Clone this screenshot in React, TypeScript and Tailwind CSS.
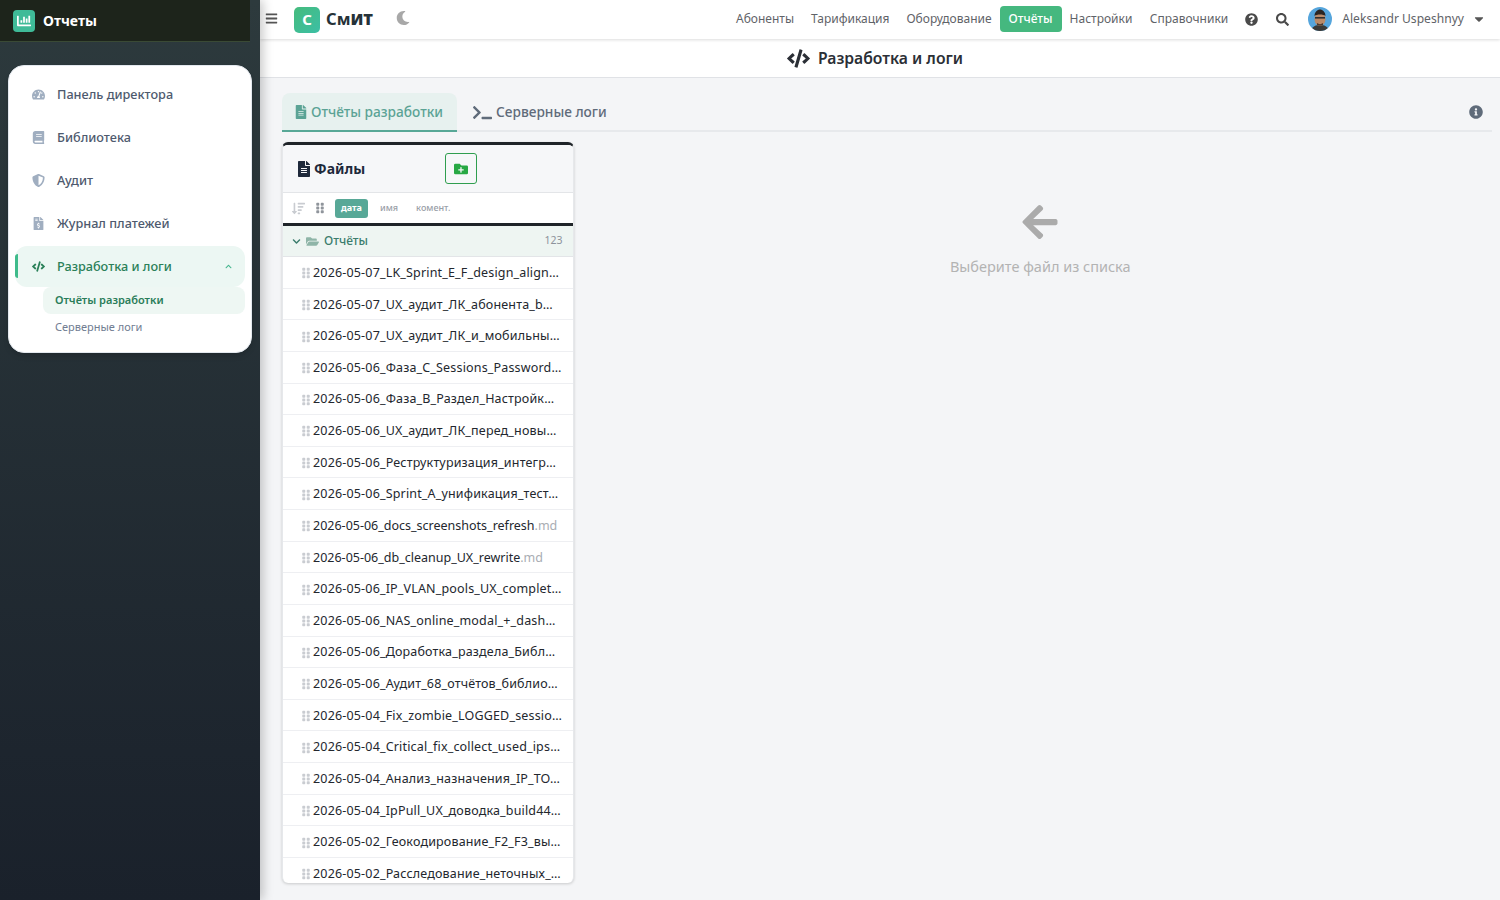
import {
  FaArrowLeft,
  FaBars,
  FaBook,
  FaCaretDown,
  FaChartBar,
  FaChevronDown,
  FaChevronUp,
  FaCode,
  FaFileAlt,
  FaFileInvoiceDollar,
  FaFolderOpen,
  FaFolderPlus,
  FaGripVertical,
  FaInfoCircle,
  FaMoon,
  FaQuestionCircle,
  FaSearch,
  FaShieldAlt,
  FaSortAmountDown,
  FaTachometerAlt,
  FaTerminal,
} from "react-icons/fa";

const files = [
  { name: "2026-05-07_LK_Sprint_E_F_design_align…" },
  { name: "2026-05-07_UX_аудит_ЛК_абонента_b…" },
  { name: "2026-05-07_UX_аудит_ЛК_и_мобильны…" },
  { name: "2026-05-06_Фаза_C_Sessions_Password…" },
  { name: "2026-05-06_Фаза_B_Раздел_Настройк…" },
  { name: "2026-05-06_UX_аудит_ЛК_перед_новы…" },
  { name: "2026-05-06_Реструктуризация_интегр…" },
  { name: "2026-05-06_Sprint_A_унификация_тест…" },
  { name: "2026-05-06_docs_screenshots_refresh", ext: ".md" },
  { name: "2026-05-06_db_cleanup_UX_rewrite", ext: ".md" },
  { name: "2026-05-06_IP_VLAN_pools_UX_complet…" },
  { name: "2026-05-06_NAS_online_modal_+_dash…" },
  { name: "2026-05-06_Доработка_раздела_Библ…" },
  { name: "2026-05-06_Аудит_68_отчётов_библио…" },
  { name: "2026-05-04_Fix_zombie_LOGGED_sessio…" },
  { name: "2026-05-04_Critical_fix_collect_used_ips…" },
  { name: "2026-05-04_Анализ_назначения_IP_TO…" },
  { name: "2026-05-04_IpPull_UX_доводка_build44…" },
  { name: "2026-05-02_Геокодирование_F2_F3_вы…" },
  { name: "2026-05-02_Расследование_неточных_…" },
];

const navLinks = ["Абоненты", "Тарификация", "Оборудование"];

const menu = [
  { label: "Панель директора", icon: FaTachometerAlt },
  { label: "Библиотека", icon: FaBook },
  { label: "Аудит", icon: FaShieldAlt },
  { label: "Журнал платежей", icon: FaFileInvoiceDollar },
];

function Avatar() {
  return (
    <svg viewBox="0 0 24 24" className="h-6 w-6 rounded-full">
      <rect width="24" height="24" fill="#55a5dc" />
      <path d="M3 24c1-5 5-6 9-6s8 1 9 6z" fill="#3a3a38" />
      <ellipse cx="12" cy="12" rx="5.5" ry="7" fill="#b98a68" />
      <path d="M6.5 9c0-4 3-6.5 5.5-6.5s5.500 2.500 5.500 6.500c-2-2-9-2-11 0z" fill="#2b2623" />
      <rect x="7" y="10" width="10" height="1.600" fill="#33302e" />
      <path d="M9 16c2 1.500 4 1.500 6 0v2c-2 1-4 1-6 0z" fill="#4a3a30" />
    </svg>
  );
}

function Sidebar() {
  return (
    <aside className="relative z-20 flex h-full w-[260px] shrink-0 flex-col bg-gradient-to-b from-[#2d3a3d] to-[#1a212b] shadow-[3px_0_10px_rgba(0,0,0,0.22)]">
      <div className="flex h-[42px] w-[250px] items-center gap-2 border-b border-[#3a4a35] bg-[#1d241b] pl-[13px]">
        <span className="flex h-[22px] w-[22px] items-center justify-center rounded-[4px] bg-[#3fbb98] text-white">
          <FaChartBar className="text-[14px]" />
        </span>
        <span className="text-[14px] font-bold text-white">Отчеты</span>
      </div>

      <nav className="mx-2 mt-[23px] h-[288px] rounded-2xl border border-[#e3e8ee] bg-white px-[6px] pt-[7px] shadow-md">
        {menu.map((item) => (
          <a
            key={item.label}
            className="flex h-[43px] items-center gap-[12px] pl-[17px] text-[12.7px] font-medium text-[#4e5a6e]"
          >
            <item.icon className="w-[13px] text-[13px] text-[#a0aec0]" />
            {item.label}
          </a>
        ))}

        <a className="relative mt-[1px] flex h-[41px] items-center gap-[12px] rounded-xl bg-[#ecf7f3] pl-[17px] text-[12.7px] font-medium text-[#2a8058]">
          <span className="absolute left-0 top-2 h-[24px] w-[3px] rounded-l bg-[#3fbb8b]" />
          <FaCode className="w-[13px] text-[13px]" />
          Разработка и логи
          <FaChevronUp className="absolute right-[13px] text-[7px] text-[#46b58e]" />
        </a>

        <div className="ml-[28px] flex h-[27px] items-center rounded-lg bg-[#eef7f3] pl-3 text-[11px] font-semibold text-[#2a7d59]">
          Отчёты разработки
        </div>
        <div className="ml-[28px] flex h-[27px] items-center pl-3 text-[11px] text-[#717d92]">
          Серверные логи
        </div>
      </nav>
    </aside>
  );
}

function TopBar() {
  return (
    <header className="z-10 flex h-[39px] shrink-0 items-center bg-white pl-[5px] pr-[14px] shadow-[0_1px_3px_rgba(0,0,0,0.14)]">
      <FaBars className="mb-[2px] text-[13px] text-[#555]" />
      <span className="ml-[16px] flex h-[26px] w-[26px] items-center justify-center rounded-[5px] bg-gradient-to-br from-[#45bb7c] to-[#3cbfa5] text-[15px] font-bold text-white">
        С
      </span>
      <span className="ml-[6px] text-[16.5px] font-bold leading-none text-[#263238]">
        См<span className="font-black">ИТ</span>
      </span>
      <FaMoon className="mb-[3px] ml-[23px] text-[14px] text-[#a8a8a8]" />

      <div className="ml-auto flex items-center pb-[1px] text-[12px] text-[#5f6368]">
        {navLinks.map((link) => (
          <a key={link} className="mr-[17px]">
            {link}
          </a>
        ))}
        <a className="-ml-[9px] mr-[8px] flex h-[26px] items-center rounded-[4px] bg-[#45b87f] px-[9px] font-medium text-white">
          Отчёты
        </a>
        <a className="mr-[17.5px]">Настройки</a>
        <a className="mr-[17px]">Справочники</a>
        <FaQuestionCircle className="mr-[18px] text-[13px] text-[#4a4a4a]" />
        <FaSearch className="mr-[19px] text-[13px] text-[#4a4a4a]" />
        <Avatar />
        <span className="ml-[10px] text-[12.1px] text-[#5f6368]">Aleksandr Uspeshnyy</span>
        <FaCaretDown className="ml-[8px] text-[14px] text-[#555]" />
      </div>
    </header>
  );
}

function Tabs() {
  return (
    <div className="flex h-[39px] items-stretch border-b-2 border-[#e7e9ec]">
      <div className="-mb-[2px] flex w-[175px] items-center justify-center gap-[3px] rounded-t-lg border-b-2 border-[#58a897] bg-[#e7f1ef] pr-[2px] pt-[1px] text-[13.7px] font-medium text-[#5ba395]">
        <FaFileAlt className="text-[14px]" />
        Отчёты разработки
      </div>
      <div className="ml-[16px] flex items-center gap-[4px] pt-[1px] text-[13.7px] font-medium text-[#5f6b7a]">
        <FaTerminal className="text-[19px]" />
        Серверные логи
      </div>
      <FaInfoCircle className="ml-auto mr-[9px] self-center text-[14px] text-[#5f6b7a]" />
    </div>
  );
}

function FileRow({ name, ext }: { name: string; ext?: string }) {
  return (
    <div className="flex h-[31.63px] shrink-0 items-center border-b border-[#eeeff2] pl-[17px] pr-[8px] pt-[2px]">
      <FaGripVertical className="mr-[1px] shrink-0 text-[12px] text-[#c9ccd1]" />
      {ext ? (
        <span className="whitespace-nowrap text-[12.5px] text-[#23272e]">
          {name}
          <span className="text-[#a9adb3]">{ext}</span>
        </span>
      ) : (
        <span className="whitespace-nowrap text-[12.5px] tracking-[0.17px] text-[#23272e]">{name}</span>
      )}
    </div>
  );
}

function FilesPanel() {
  return (
    <section className="flex h-[741px] w-[291.5px] shrink-0 flex-col overflow-hidden rounded-md border-x border-[#e6e8eb] border-t-[3px] border-t-[#1f2429] bg-white shadow-[0_1px_3px_rgba(0,0,0,0.18)]">
      <div className="flex h-[48px] shrink-0 items-center border-b border-[#e3e5e8] bg-[#f6f7f9] pl-[13px]">
        <FaFileAlt className="text-[16px] text-[#1e293b]" />
        <span className="ml-[2px] text-[14px] font-bold text-[#1e293b]">Файлы</span>
        <button className="ml-[80px] flex h-[31px] w-[32px] items-center justify-center rounded-[3px] border border-[#2f9e4f] text-[14px] text-[#27a844]">
          <FaFolderPlus />
        </button>
      </div>

      <div className="flex h-[30px] shrink-0 items-center pl-[9px] text-[9px] font-medium text-[#9aa0a8]">
        <FaSortAmountDown className="text-[13px] text-[#c9ccd1]" />
        <FaGripVertical className="ml-[9px] text-[12px] text-[#8f949b]" />
        <span className="ml-[9px] flex h-[19px] w-[33px] items-center justify-center rounded-[3px] bg-[#58a897] font-bold text-white">
          дата
        </span>
        <span className="ml-[12px]">имя</span>
        <span className="ml-[18px]">комент.</span>
      </div>

      <div className="flex h-[34px] shrink-0 items-center border-b border-[#e3e5e8] border-t-[3px] border-t-[#1f2429] bg-[#eef5f2] pl-[9px] pr-[10px] text-[12px]">
        <FaChevronDown className="text-[9px] text-[#3c7d6d]" />
        <FaFolderOpen className="ml-[5px] text-[13px] text-[#8fb5a8]" />
        <span className="ml-[5px] font-medium text-[#3c7d6d]">Отчёты</span>
        <span className="ml-auto text-[10.5px] text-[#8d939b]">123</span>
      </div>

      <div className="flex min-h-0 flex-1 flex-col overflow-hidden">
        {files.map((file) => (
          <FileRow key={file.name} name={file.name} ext={file.ext} />
        ))}
      </div>
    </section>
  );
}

export default function App() {
  return (
    <div className="flex h-screen w-full overflow-hidden bg-[#f4f5f7] font-['Noto_Sans',sans-serif]">
      <Sidebar />

      <main className="flex min-w-0 flex-1 flex-col">
        <TopBar />

        <div className="flex h-[39px] shrink-0 items-center justify-center gap-[8px] border-b border-[#e0e2e6] bg-white pr-[10px] pt-[1px] text-[15.7px] font-semibold text-[#2b2f36]">
          <FaCode className="text-[23px]" />
          Разработка и логи
        </div>

        <div className="flex min-h-0 flex-1 flex-col pl-[22px] pr-[8px] pt-[15px]">
          <Tabs />

          <div className="mt-[10px] flex min-h-0 flex-1 items-start">
            <FilesPanel />
            <div className="flex flex-1 flex-col items-center pl-[15px] pt-[60px]">
              <FaArrowLeft className="text-[40px] text-[#ababab]" />
              <p className="mt-[14px] text-[14.5px] text-[#b3b3b3]">Выберите файл из списка</p>
            </div>
          </div>
        </div>
      </main>
    </div>
  );
}
